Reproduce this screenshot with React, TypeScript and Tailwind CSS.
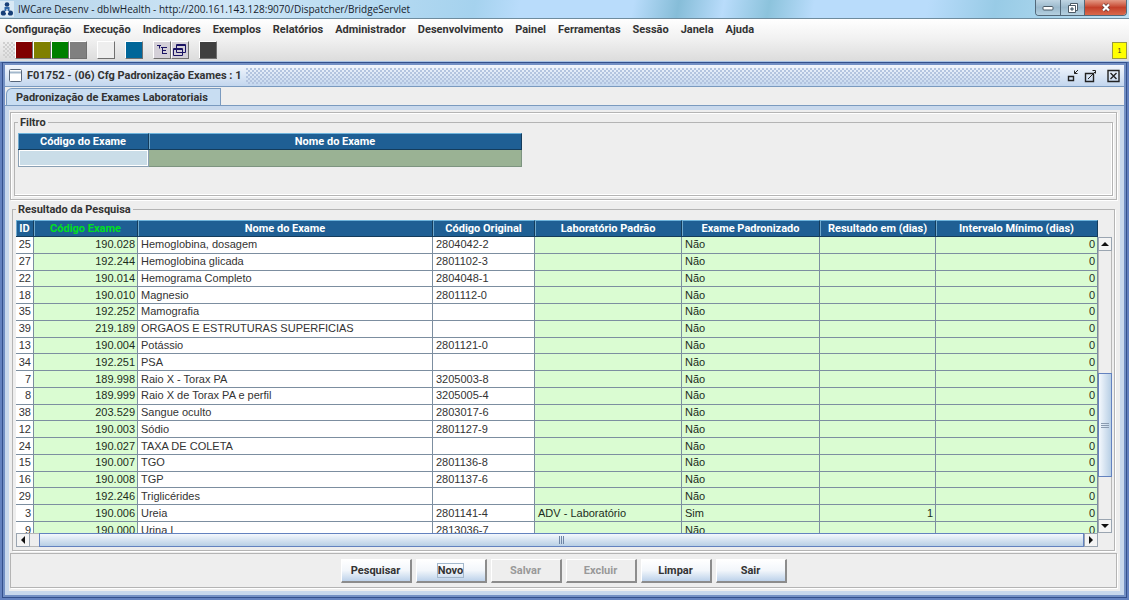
import type { ReactNode } from "react";

const menus = ["Configuração", "Execução", "Indicadores", "Exemplos", "Relatórios", "Administrador", "Desenvolvimento", "Painel", "Ferramentas", "Sessão", "Janela", "Ajuda"];

type Row = [string, string, string, string, string?, string?, string?];
const rows: Row[] = [
  ["25", "190.028", "Hemoglobina, dosagem", "2804042-2"],
  ["27", "192.244", "Hemoglobina glicada", "2801102-3"],
  ["22", "190.014", "Hemograma Completo", "2804048-1"],
  ["18", "190.010", "Magnesio", "2801112-0"],
  ["35", "192.252", "Mamografia", ""],
  ["39", "219.189", "ORGAOS E ESTRUTURAS SUPERFICIAS", ""],
  ["13", "190.004", "Potássio", "2801121-0"],
  ["34", "192.251", "PSA", ""],
  ["7", "189.998", "Raio X - Torax PA", "3205003-8"],
  ["8", "189.999", "Raio X de Torax PA e perfil", "3205005-4"],
  ["38", "203.529", "Sangue oculto", "2803017-6"],
  ["12", "190.003", "Sódio", "2801127-9"],
  ["24", "190.027", "TAXA DE COLETA", ""],
  ["15", "190.007", "TGO", "2801136-8"],
  ["16", "190.008", "TGP", "2801137-6"],
  ["29", "192.246", "Triglicérides", ""],
  ["3", "190.006", "Ureia", "2801141-4", "ADV - Laboratório", "Sim", "1"],
  ["9", "190.000", "Urina I", "2813036-7"],
];

const strong = "font-['Roboto','Liberation_Sans',sans-serif] font-bold";

function Th({ children, accent = false }: { children: ReactNode; accent?: boolean }) {
  return (
    <th
      className={
        "overflow-hidden whitespace-nowrap border-b border-r border-t border-b-[#143c5c] border-r-[#143c5c] border-t-[#6fb4dc] bg-[#1f5f94] p-0 text-center leading-[14px] shadow-[inset_1px_0_0_#6fa8cc] " +
        strong +
        (accent ? " text-[#00e020]" : " text-white")
      }
    >
      {children}
    </th>
  );
}

const cell = "overflow-hidden whitespace-nowrap border-b border-r border-[#7c8ea0] p-0 leading-[15px]";

function ToolSwatch({ label, color, children }: { label: string; color: string; children?: ReactNode }) {
  return (
    <button
      type="button"
      aria-label={label}
      className={"flex h-[18px] w-[18px] items-center justify-center border border-b-[#707070] border-l-white border-r-[#707070] border-t-white " + color}
    >
      {children}
    </button>
  );
}

function ActionButton({ children, focused = false, disabled = false }: { children: ReactNode; focused?: boolean; disabled?: boolean }) {
  return (
    <button
      type="button"
      disabled={disabled}
      className={
        "flex h-6 w-[71px] items-center justify-center border-b-2 border-l border-r-2 border-t border-b-[#8c8c8c] border-l-white border-r-[#8c8c8c] border-t-white " +
        strong +
        (disabled ? " bg-[#eeeeee] text-[#999999]" : " bg-linear-to-b from-white via-[#f2f6fb] to-[#bdd2ea] text-[#333333]")
      }
    >
      <span className={focused ? "outline outline-1 outline-[#a3b8cc]" : ""}>{children}</span>
    </button>
  );
}

function ArrowButton({ label, points }: { label: string; points: string }) {
  return (
    <button type="button" aria-label={label} className="flex h-[14px] w-[14px] shrink-0 items-center justify-center border border-[#9aa5b1] bg-[#f4f4f4]">
      <svg width="10" height="10" viewBox="0 0 10 10" aria-hidden="true">
        <polygon points={points} fill="#111" />
      </svg>
    </button>
  );
}

export default function App() {
  return (
    <div className="flex h-screen flex-col overflow-hidden bg-[#eeeeee] font-['Liberation_Sans',Arial,sans-serif] text-[11px] leading-[13px] text-[#333333]">
      <header className="flex h-[19px] shrink-0 items-start justify-between border-b border-[#6f8c9e] bg-[linear-gradient(100deg,#b4d3ea_0%,#cfe6f6_20%,#a5d2ee_42%,#b9dcfb_46%,#b9dcfb_56%,#86bdd8_60%,#b9dcfb_64%,#8cc3dc_68%,#b9dcfb_72%,#b9dcfb_82%,#98cbe6_88%,#c0e2f5_100%)]">
        <div className="flex h-[18px] items-center gap-1">
          <svg width="14" height="16" viewBox="0 0 14 16" aria-hidden="true">
            <rect width="14" height="16" fill="#d9e9f5" />
            <circle cx="7" cy="3.5" r="2.3" fill="#173f78" />
            <path d="M4.5 6h5v4h-5z" fill="#2f67a8" />
            <circle cx="3.4" cy="12" r="2.6" fill="#173f78" />
            <circle cx="10.4" cy="12" r="2.6" fill="#173f78" />
            <path d="M5 11h4M7 8v5" stroke="#fff" strokeWidth="1" />
          </svg>
          <h1 className="font-['Open_Sans','Noto_Sans',sans-serif] text-[10px] text-[#16222c]">IWCare Desenv - dbIwHealth - http://200.161.143.128:9070/Dispatcher/BridgeServlet</h1>
        </div>
        <div className="mr-[2px] flex h-4 overflow-hidden rounded-b border border-t-0 border-[#52697a]">
          <button type="button" aria-label="Minimizar" className="flex w-[25px] items-center justify-center border-r border-[#52697a] bg-linear-to-b from-[#bfd5e3] via-[#9bb9cc] to-[#b4d0e0]">
            <svg width="12" height="6" viewBox="0 0 12 6" aria-hidden="true"><rect x="1" y="1.5" width="10" height="3.5" rx="1" fill="#fff" stroke="#4b5a66" /></svg>
          </button>
          <button type="button" aria-label="Restaurar" className="flex w-6 items-center justify-center border-r border-[#52697a] bg-linear-to-b from-[#bfd5e3] via-[#9bb9cc] to-[#b4d0e0]">
            <svg width="12" height="12" viewBox="0 0 12 12" fill="#fff" stroke="#4b5a66" aria-hidden="true"><path d="M3.5 1.5h7v7h-7z" /><path d="M1.5 3.5h7v7h-7z" /><path d="M4 6h2v2H4z" fill="#9bb9cc" /></svg>
          </button>
          <button type="button" aria-label="Fechar" className="flex w-[41px] items-center justify-center bg-linear-to-b from-[#e39a86] via-[#c4402a] to-[#d9694c]">
            <svg width="10" height="9" viewBox="0 0 10 9" aria-hidden="true"><path d="M2 1.5l6 6M8 1.5l-6 6" stroke="#5e3a38" strokeWidth="3.6" /><path d="M2 1.5l6 6M8 1.5l-6 6" stroke="#fff" strokeWidth="2.2" /></svg>
          </button>
        </div>
      </header>

      <div className="shrink-0 border-b border-[#a9c2e2] bg-linear-to-b from-white via-[#f0f0f0] to-[#dcdcdc]">
        <nav className={"flex h-5 items-center gap-3 pl-[5px] " + strong}>
          {menus.map((m) => (
            <button key={m} type="button">{m}</button>
          ))}
        </nav>
        <div className="flex h-[22px] items-center pl-[3px] pr-[2px]">
          <span className="h-4 w-3 bg-[radial-gradient(circle_at_1px_1px,#d0d0d0_1px,transparent_1px),radial-gradient(circle_at_3px_3px,#d0d0d0_1px,transparent_1px)] bg-size-[4px_4px]" />
          <div className="flex flex-1 items-center">
            <ToolSwatch label="Vermelho" color="bg-[#800000]" />
            <ToolSwatch label="Oliva" color="bg-[#808000]" />
            <ToolSwatch label="Verde" color="bg-[#008000]" />
            <ToolSwatch label="Cinza" color="bg-[#808080]" />
            <span className="w-[10px]" />
            <ToolSwatch label="Branco" color="bg-[#eeeeee]" />
            <span className="w-[10px]" />
            <ToolSwatch label="Azul" color="bg-[#006699]" />
            <span className="w-[10px]" />
            <ToolSwatch label="Árvore" color="bg-[#d4d0d8]">
              <svg width="14" height="14" viewBox="0 0 14 14" stroke="#1b1464" fill="none" aria-hidden="true"><path d="M2 2.500h4M4.500 2.500v3M7.500 4v7M6 4.500h6M7 7.500h4M7 10.500h5" /></svg>
            </ToolSwatch>
            <ToolSwatch label="Janelas" color="bg-[#d4d0d8]">
              <svg width="16" height="16" viewBox="0 0 16 16" stroke="#1b1464" fill="none" aria-hidden="true"><path d="M4.500 2.500h9v8h-9zM4 3.500h10M1.500 6.500h9v7h-9zM1 7.500h10" /></svg>
            </ToolSwatch>
            <span className="w-[10px]" />
            <ToolSwatch label="Escuro" color="bg-[#404040]" />
          </div>
          <span className="flex h-[17px] w-[15px] items-center justify-center border border-[#9a9a40] bg-[#ffff00] text-[7px]">1</span>
        </div>
      </div>

      <div className="flex min-h-0 flex-1 flex-col border-x-[5px] border-b-[5px] border-t-[3px] border-b-[#6482bf] border-l-[#6482bf] border-r-[#6482bf] border-t-[#47649a]">
        <section className="flex min-h-0 flex-1 flex-col shadow-[0_0_0_2px_#7390c4,0_0_0_3px_#34508c]">
          <div className="flex h-[22px] shrink-0 items-center gap-[5px] border-b border-[#7a9abf] bg-linear-to-b from-[#f2f6fc] to-[#c3d6ee] pl-1 pr-1">
            <svg width="13" height="13" viewBox="0 0 13 13" fill="#fff" stroke="#56657a" aria-hidden="true"><rect x=".5" y=".5" width="12" height="12" rx="1" /><path d="M1 3.500h11" stroke="#a3b8cc" strokeWidth="2" /></svg>
            <h2 className={strong}>F01752 - (06) Cfg Padronização Exames : 1</h2>
            <span className="h-4 flex-1 bg-[radial-gradient(circle_at_1px_1px,#b3c4df_1px,transparent_1px),radial-gradient(circle_at_3px_3px,#b3c4df_1px,transparent_1px)] bg-size-[4px_4px]" />
            <div className="flex items-center gap-[6px]">
              <button type="button" aria-label="Minimizar janela">
                <svg width="13" height="14" viewBox="0 0 13 14" fill="none" stroke="#222" aria-hidden="true"><path d="M3.500 7.500h5v4h-5z" strokeWidth="1.400" /><path d="M13 1L9.500 4.500M9.500 1.500v3h3" /></svg>
              </button>
              <button type="button" aria-label="Maximizar janela">
                <svg width="13" height="14" viewBox="0 0 13 14" fill="none" stroke="#222" aria-hidden="true"><path d="M1.500 4.500h8v8h-8z" strokeWidth="1.400" /><path d="M4 10L12 2M8.500 1.500h3v3" /></svg>
              </button>
              <button type="button" aria-label="Fechar janela" className="pl-1">
                <svg width="13" height="14" viewBox="0 0 13 14" fill="none" stroke="#222" aria-hidden="true"><path d="M1 1.500h11v11H1z" strokeWidth="1.400" /><path d="M3.500 4l6 6M9.500 4l-6 6" strokeWidth="1.400" /></svg>
              </button>
            </div>
          </div>

          <div className="flex h-[19px] shrink-0 items-end border-b border-[#7a9abf]">
            <button type="button" className={"ml-[1px] flex h-[17px] items-center rounded-tl-[6px] border border-b-0 border-[#7a9abf] bg-[#c8ddf2] pl-[9px] pr-3 " + strong}>Padronização de Exames Laboratoriais</button>
          </div>

          <main className="flex min-h-0 flex-1 flex-col border-4 border-[#c8d8ec] pl-[1px] pr-[3px] pt-[2px]">
            <div className="shrink-0 border border-[#b4b4b4] px-[3px] pb-[3px] pt-[3px] shadow-[inset_1px_1px_0_#fff,1px_1px_0_#fff]">
              <fieldset className="h-[80px] border border-[#b4b4b4] pl-[3px] shadow-[inset_-1px_-1px_0_#fff,1px_1px_0_#fff]">
                <legend className={"bg-[#eeeeee] px-[2px] " + strong}>Filtro</legend>
                <table className="mt-[4px] w-[504px] table-fixed border-separate border-spacing-0">
                  <colgroup><col className="w-[131px]" /><col /></colgroup>
                  <thead><tr className="h-[17px]"><Th>Código do Exame</Th><Th>Nome do Exame</Th></tr></thead>
                  <tbody>
                    <tr className="h-[17px]">
                      <td className="border border-t-0 border-[#8aa0b4] bg-[#cadde8] p-0"><input aria-label="Código do Exame" className="block h-4 w-full border border-white bg-transparent px-1 outline-none" /></td>
                      <td className="border-b border-r border-[#7d9480] bg-[#9ab294] p-0"><input aria-label="Nome do Exame" className="block h-4 w-full bg-transparent px-1 outline-none" /></td>
                    </tr>
                  </tbody>
                </table>
              </fieldset>
            </div>

            <fieldset className="mx-[2px] mt-[3px] flex min-h-0 flex-1 flex-col border border-[#b4b4b4] pb-[3px] pl-[3px] pr-[2px] shadow-[1px_1px_0_#fff]">
              <legend className={"px-[2px] " + strong}>Resultado da Pesquisa</legend>
              <div className="mt-[4px] flex min-h-0 flex-1">
                <div className="min-w-0 flex-1 overflow-hidden">
                  <table className="h-[319px] w-full table-fixed border-separate border-spacing-0 bg-white">
                    <colgroup>
                      <col className="w-[18px]" /><col className="w-[104px]" /><col /><col className="w-[102px]" /><col className="w-[147px]" /><col className="w-[138px]" /><col className="w-[116px]" /><col className="w-[162px]" />
                    </colgroup>
                    <thead>
                      <tr className="h-[17px]">
                        <Th>ID</Th><Th accent>Código Exame</Th><Th>Nome do Exame</Th><Th>Código Original</Th><Th>Laboratório Padrão</Th><Th>Exame Padronizado</Th><Th>Resultado em (dias)</Th><Th>Intervalo Mínimo (dias)</Th>
                      </tr>
                    </thead>
                    <tbody>
                      {rows.map(([id, code, name, original, lab = "", standard = "Não", days = ""]) => (
                        <tr key={id}>
                          <td className={cell + " pr-[2px] text-right"}>{id}</td>
                          <td className={cell + " bg-[#dafcd2] pr-[2px] text-right text-[#1c2c1c]"}>{code}</td>
                          <td className={cell + " pl-[3px]"}>{name}</td>
                          <td className={cell + " pl-[3px]"}>{original}</td>
                          <td className={cell + " bg-[#dafcd2] pl-[3px] text-[#1c2c1c]"}>{lab}</td>
                          <td className={cell + " bg-[#dafcd2] pl-[3px] text-[#1c2c1c]"}>{standard}</td>
                          <td className={cell + " bg-[#dafcd2] pr-[2px] text-right text-[#1c2c1c]"}>{days}</td>
                          <td className={cell + " bg-[#dafcd2] pr-[2px] text-right text-[#1c2c1c]"}>0</td>
                        </tr>
                      ))}
                    </tbody>
                  </table>
                </div>
                <div className="flex w-[14px] flex-col pt-[17px]">
                  <ArrowButton label="Rolar para cima" points="1,7 5,3 9,7" />
                  <div className="flex min-h-0 flex-1 flex-col border-x border-[#b8b8b8]">
                    <div className="h-[122px]" />
                    <div className="-mx-[1px] flex h-[104px] flex-col items-center justify-center gap-[1px] border border-[#6382bf] bg-linear-to-r from-[#f4f8fd] to-[#b8cfe5]">
                      <span className="h-[1px] w-2 bg-[#8a9bb0]" /><span className="h-[1px] w-2 bg-[#8a9bb0]" /><span className="h-[1px] w-2 bg-[#8a9bb0]" />
                    </div>
                  </div>
                  <ArrowButton label="Rolar para baixo" points="1,3 5,7 9,3" />
                </div>
              </div>
              <div className="mr-[14px] flex h-[14px] shrink-0">
                <ArrowButton label="Rolar para a esquerda" points="7,1 3,5 7,9" />
                <div className="flex flex-1 border-y border-[#b8b8b8] pl-[9px]">
                  <div className="-my-[1px] flex flex-1 items-center justify-center gap-[1px] border border-[#6382bf] bg-linear-to-b from-[#f4f8fd] to-[#b8cfe5]">
                    <span className="h-2 w-[1px] bg-[#6f86a6]" /><span className="h-2 w-[1px] bg-[#6f86a6]" /><span className="h-2 w-[1px] bg-[#6f86a6]" />
                  </div>
                </div>
                <ArrowButton label="Rolar para a direita" points="3,1 7,5 3,9" />
              </div>
            </fieldset>

            <div className="mb-[3px] mt-[2px] flex h-[35px] shrink-0 items-center justify-center gap-1 border border-[#b4b4b4] shadow-[1px_1px_0_#fff]">
              <ActionButton>Pesquisar</ActionButton>
              <ActionButton focused>Novo</ActionButton>
              <ActionButton disabled>Salvar</ActionButton>
              <ActionButton disabled>Excluir</ActionButton>
              <ActionButton>Limpar</ActionButton>
              <ActionButton>Sair</ActionButton>
            </div>
          </main>
        </section>
      </div>
    </div>
  );
}
